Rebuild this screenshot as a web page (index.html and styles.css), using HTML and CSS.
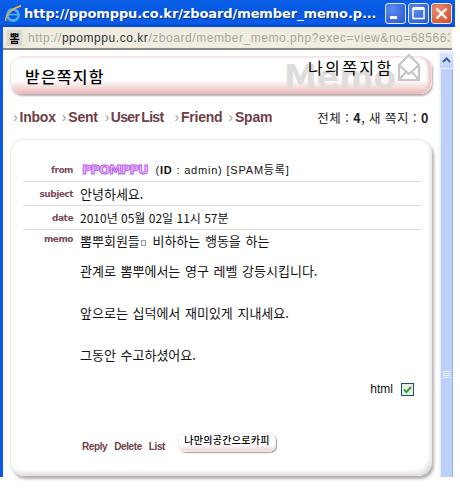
FILE: index.html
```html
<!DOCTYPE html>
<html lang="ko">
<head>
<meta charset="utf-8">
<title>Memo</title>
<link rel="stylesheet" href="styles.css">
</head>
<body>
<div class="window">
  <div class="titlebar">
    <svg class="ie" width="20" height="20" viewBox="0 0 20 20"><circle cx="10" cy="11" r="5.6" fill="none" stroke="#55aeea" stroke-width="2.6"/><path d="M5 10.6h11" stroke="#55aeea" stroke-width="1.6"/><path d="M3 17C1 13 10 3 18 2c-1 0-3 1-4 2" fill="none" stroke="#f2b233" stroke-width="1.4"/></svg>
    <span class="title">http://ppomppu.co.kr/zboard/member_memo.p...</span>
    <div class="winbtns">
      <span class="wb"><svg width="21" height="21" viewBox="0 0 21 21"><rect x="5" y="13" width="7" height="3" fill="#fff"/></svg></span>
      <span class="wb"><svg width="21" height="21" viewBox="0 0 21 21"><path d="M5 5.5h11v10H5z" fill="none" stroke="#fff" stroke-width="1.5"/><path d="M5 5.5h11" stroke="#fff" stroke-width="3"/></svg></span>
      <span class="wb close"><svg width="21" height="21" viewBox="0 0 21 21"><path d="M5.5 5.5l10 10M15.5 5.5l-10 10" stroke="#fff" stroke-width="2.4"/></svg></span>
    </div>
  </div>
  <div class="addressbar">
    <b class="addr-icon">뽐</b>
    <div class="addr-url">http://<span class="dark">ppomppu.co.kr</span>/zboard/member_memo.php?exec=view&amp;no=6856638</div>
  </div>
  <div class="client">
    <main class="page">
      <header class="head">
        <h1>받은쪽지함</h1>
        <div class="head-right">
          <span class="watermark">Memo</span>
          <svg class="wm-icon" width="26" height="30" viewBox="0 0 26 30"><path d="M3 12L13 2l10 10v15H3zM3 12l10 9 10-9M3 27l7-8M23 27l-7-8" fill="none" stroke="#c9c5c5" stroke-width="2.2"/></svg>
          <span class="mybox">나의쪽지함</span>
        </div>
      </header>
      <nav class="tabs">
        <div class="tablist">
          <a class="tab"><i>›</i>Inbox</a>
          <a class="tab"><i>›</i>Sent</a>
          <a class="tab tab-mid"><i>›</i>User List</a>
          <a class="tab tab-far"><i>›</i>Friend</a>
          <a class="tab"><i>›</i>Spam</a>
        </div>
        <div class="count">전체 : <b>4</b>, 새 쪽지 : <b>0</b></div>
      </nav>
      <section class="card">
        <div class="row from">
          <div class="label">from</div>
          <div class="value from-value"><span class="logo">PPOMPPU</span> (<b>ID</b> : admin) [SPAM등록]</div>
        </div>
        <div class="row">
          <div class="label">subject</div>
          <div class="value text">안녕하세요.</div>
        </div>
        <div class="row">
          <div class="label">date</div>
          <div class="value">2010년 05월 02일 11시 57분</div>
        </div>
        <div class="row memo">
          <div class="label">memo</div>
          <div class="value text">
            <p>뽐뿌회원들<span class="box"></span> 비하하는 행동을 하는</p>
            <p>관계로 뽐뿌에서는 영구 레벨 강등시킵니다.</p>
            <p>&nbsp;</p>
            <p>앞으로는 십덕에서 재미있게 지내세요.</p>
            <p>&nbsp;</p>
            <p>그동안 수고하셨어요.</p>
          </div>
        </div>
        <div class="html-row">
          <span>html</span>
          <span class="check"><svg width="11" height="11" viewBox="0 0 11 11"><path d="M2 5.5l2.4 2.6L9 3" fill="none" stroke="#3f9a3f" stroke-width="2"/></svg></span>
        </div>
        <div class="actions">
          <a>Reply</a><a>Delete</a><a>List</a>
          <button class="copy" type="button">나만의공간으로카피</button>
        </div>
      </section>
    </main>
    <aside class="scrollbar">
      <div class="sb-btn"><svg width="13" height="13" viewBox="0 0 13 13"><path d="M3 8l3.5-3.5L10 8" fill="none" stroke="#3d6193" stroke-width="2"/></svg></div>
      <div class="sb-track">
        <div class="sb-thumb"><span class="grip"></span></div>
      </div>
    </aside>
  </div>
</div>
</body>
</html>
```
FILE: styles.css
```css
* { box-sizing: border-box; }
html, body { margin: 0; padding: 0; background: #fff; }
body { width: 460px; height: 495px; overflow: hidden; font-family: "Liberation Sans", "Noto Sans CJK KR", sans-serif; color: #111; }
.window { width: 455px; height: 477px; display: flex; flex-direction: column; background: #fff; border-left: 3px solid #0a5ae0; }
.titlebar { height: 27px; margin-left: -3px; padding: 0 3px 0 3px; display: flex; align-items: center; gap: 1px; background: linear-gradient(#0a5fe6, #0558e2 45%, #0a5ce8 85%, #0348c8); }
.ie { flex: none; }
.title { flex: 1; color: #fff; font: bold 13px "DejaVu Sans", sans-serif; letter-spacing: -.1px; white-space: nowrap; overflow: hidden; text-shadow: 1px 1px 0 #03308f; }
.winbtns { display: flex; gap: 2px; }
.wb { width: 21px; height: 21px; border: 1px solid #dfe8fb; border-radius: 3px; background: radial-gradient(circle at 30% 30%, #5a8cf0, #2a56d0); }
.wb svg { display: block; margin: -1px; }
.wb.close { background: radial-gradient(circle at 30% 30%, #ec8e6e, #d3471f); }
.addressbar { height: 23px; width: 449px; background: #ece9d8; display: flex; align-items: center; gap: 6px; padding: 0 2px 0 4px; border-bottom: 2px solid #8c8c86; }
.addr-icon { font-size: 11px; background: #d8d8d4; width: 15px; flex: none; text-align: center; color: #000; }
.addr-url { flex: 1; font-family: "Liberation Sans", sans-serif; font-size: 12px; letter-spacing: .55px; color: #a8a69a; white-space: nowrap; overflow: hidden; line-height: 18px; background: #f0eee2; }
.dark { color: #333; }
.client { flex: 1; display: flex; background: #fff; min-height: 0; }
.page { width: 436px; flex: none; padding: 6px 7px 0 7px; display: flex; flex-direction: column; }
.head { height: 38px; position: relative; border-radius: 12px; background: linear-gradient(#fff 62%, #f2d5d5 85%, #e8b5b5); box-shadow: 1px 2px 2px #b9aeae, inset -3px 0 3px #eec6c6; border: 1px solid #ece8e4; border-bottom: 0; display: flex; justify-content: space-between; align-items: center; padding: 0 0 0 14px; }
.head h1 { margin: 0; font: 500 16px "Noto Sans CJK KR", sans-serif; letter-spacing: 1.2px; color: #000; }
.head-right { position: relative; width: 150px; height: 37px; }
.watermark { position: absolute; left: 3px; top: 3px; font: bold 33px/36px "DejaVu Sans", sans-serif; color: #e0dcdc; white-space: nowrap; }
.wm-icon { position: absolute; left: 115px; top: -4px; }
.mybox { position: absolute; left: 27px; top: -1px; font: 16px/22px "Noto Sans CJK KR", sans-serif; letter-spacing: 2.4px; color: #000; white-space: nowrap; }
.tabs { display: flex; justify-content: space-between; align-items: center; height: 28px; margin-top: 9px; padding-right: 3px; }
.tablist { display: flex; gap: 6px; margin-left: 3px; }
.tab { font: bold 14px "Liberation Sans", sans-serif; letter-spacing: -.2px; word-spacing: -1px; color: #6f3e46; white-space: nowrap; }
.tab-mid { margin-left: 1px; letter-spacing: -.7px; }
.tab-far { margin-left: 5px; }
.tab i { font-style: normal; font-weight: normal; color: #999; margin-right: 2px; }
.count { font: 12.5px "Noto Sans CJK KR", sans-serif; letter-spacing: .5px; color: #222; white-space: nowrap; }
.card { margin-top: 8px; height: 337px; padding: 18px 10px 0 12px; position: relative; border: 1px solid #eee8e4; border-bottom: 0; border-radius: 14px; box-shadow: 2px 3px 3px #b7b0b0, inset -3px -6px 5px -3px #ddd8d8; background: #fff; display: flex; flex-direction: column; }
.row { display: flex; align-items: center; height: 24px; border-bottom: 1px solid #e2dada; }
.label { width: 50px; flex: none; text-align: right; font: bold 9px "DejaVu Sans", sans-serif; letter-spacing: -.5px; color: #7a4e58; }
.value { margin-left: 7px; font: 12px/18px "Noto Sans CJK KR", sans-serif; color: #111; white-space: nowrap; }
.value.text { font-size: 13px; word-spacing: 1px; }
.from-value { font: 11px/18px "Liberation Sans", "Noto Sans CJK KR", sans-serif; letter-spacing: .8px; }
.logo { font: bold 13px/18px "DejaVu Sans", sans-serif; color: #f3c8fb; -webkit-text-stroke: 1px #b45cf0; letter-spacing: -1px; margin: 0 4px 0 2px; }
.row.memo { align-items: flex-start; height: auto; border-bottom: 0; padding-top: 0; }
.row.memo .label { padding-top: 4px; }
.row.memo p { margin: 0; height: 21px; line-height: 21px; }
.row.memo p:first-child { height: 30px; }
.box { display: inline-block; width: 5px; height: 6px; border: 1px solid #999; margin: 0 2px 0 1px; }
.html-row { display: flex; justify-content: flex-end; align-items: center; gap: 8px; font: 12px "Liberation Sans", sans-serif; margin-top: 15px; padding-right: 7px; height: 18px; }
.check { width: 13px; height: 13px; border: 1px solid #1f4f78; background: #e6efe4; display: flex; align-items: center; justify-content: center; }
.actions { display: flex; align-items: flex-end; margin-top: 35px; padding-left: 59px; font: bold 10px "Liberation Sans", sans-serif; letter-spacing: -.4px; color: #6f3e46; gap: 7px; }
.copy { margin: 0 0 0 6px; width: 98px; height: 19px; padding: 0 0 5px; border: 1px solid #eee; border-radius: 7px; background: linear-gradient(#fff 60%, #f2d5d5); box-shadow: 1px 1px 1px #a99; font: 500 10px/12px "Noto Sans CJK KR", sans-serif; letter-spacing: .3px; color: #000; white-space: nowrap; }
.scrollbar { width: 15px; display: flex; flex-direction: column; background: #f5f7fd; }
.sb-btn { height: 17px; margin-top: 2px; background: linear-gradient(#dbe7fd, #bdd0f8); border: 1px solid #eef3fd; border-radius: 2px; display: flex; align-items: center; justify-content: center; }
.sb-track { flex: 1; display: flex; padding: 0 1px; }
.sb-thumb { flex: 1; background: #bdd0fa; border-left: 1px solid #e4ecfd; border-right: 1px solid #9db4ea; display: flex; align-items: center; justify-content: center; padding-top: 204px; }
.grip { display: block; width: 7px; height: 8px; background: repeating-linear-gradient(#eef3fe 0 1px, transparent 1px 2px); }
```
